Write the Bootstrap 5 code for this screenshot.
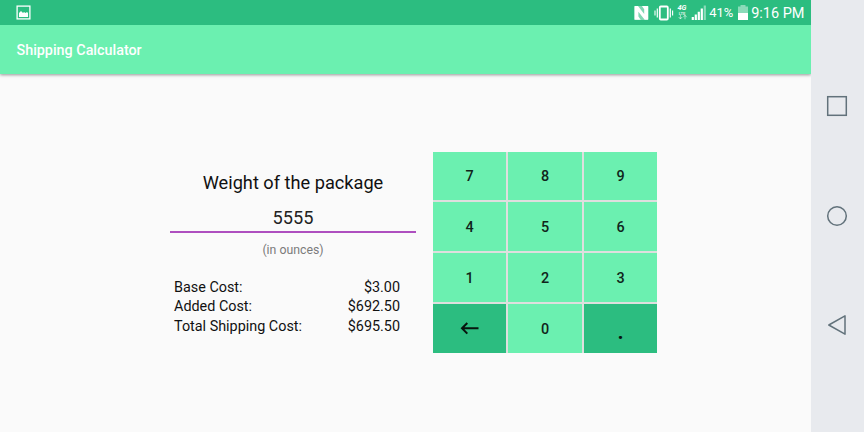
<!DOCTYPE html>
<html lang="en">
<head>
<meta charset="utf-8">
<meta name="viewport" content="width=device-width, initial-scale=1">
<title>Shipping Calculator</title>
<link href="https://cdn.jsdelivr.net/npm/bootstrap@5.3.0/dist/css/bootstrap.min.css" rel="stylesheet">
<style>
body{font-family:Roboto,sans-serif;background:#fafafa;color:#111}
.screen{width:811px}
.status-bar{height:25px;background:#2cbd80;color:#fff;padding:0 6.5px 0 16px}
.status-bar svg{display:block}
.app-bar{height:49px;background:#6bf0b0;color:#fff;padding:2px 16.5px 0;box-shadow:0 1px 3px rgba(0,0,0,.4);clip-path:inset(0 0 -8px 0)}
.app-title{font-size:14.35px;font-weight:500;line-height:18px}
.status-text{font-size:13px;line-height:16px;width:25px;margin:1px 4px 0 2px}
.batt{margin-right:3px}
.clock{font-size:14.5px;line-height:16px;padding-top:2px}
.main-area{padding:78px 0 0 170px}
.form-pane{width:246px;margin-right:17px;padding-top:19px}
.weight-label{font-size:18.2px;line-height:24px}
.weight-input{height:38px;padding:8px 0 0;font-size:18.2px;line-height:24px;color:#222;border:0;border-bottom:2px solid #ae4fbf;border-radius:0;background:transparent}
.weight-input:focus{box-shadow:none;background:transparent;border-color:#ae4fbf}
.unit-hint{font-size:12.3px;line-height:16px;margin-top:9px;color:#7b7b7b}
.costs{margin:19.9px 16px 0 4px;font-size:14.38px;line-height:19.6px}
.keypad{display:grid;grid-template-columns:73px 74px 73px;grid-template-rows:48px 49px 49px 49px;gap:2px;background:#dedfde}
.keypad .btn{--bs-btn-bg:#6bf0b0;--bs-btn-hover-bg:#5fe3a3;--bs-btn-active-bg:#2cbd80;--bs-btn-color:#10251b;font-size:14.4px;font-weight:500;border:0;border-radius:0;padding:2px 0 0;line-height:18px}
.keypad .key-dark{--bs-btn-bg:#2cbd80;--bs-btn-hover-bg:#27ad75;--bs-btn-color:#07150e}
.keypad .key-back{padding:0}
.keypad .dot-key{font-size:24px;padding-top:5px}
.nav-rail{width:53px;background:#e8eaee;padding:95px 1px 0 0}
.nav-rail svg{display:block;margin-bottom:87.5px}
</style>
<script src="https://cdn.jsdelivr.net/npm/bootstrap@5.3.0/dist/js/bootstrap.bundle.min.js"></script>
</head>
<body class="d-flex vh-100 overflow-hidden">
<div class="screen d-flex flex-column flex-shrink-0">
  <div class="status-bar d-flex align-items-center flex-shrink-0">
    <svg width="15" height="15" viewBox="0 0 15 15"><rect x="1.1" y="1.1" width="12.8" height="12.8" fill="none" stroke="#fff" stroke-width="1.3"/><path d="M3 12V8l2-2 2 2 1-1 1.5 1 1.5-1 1 1v4z" fill="#fff"/></svg>
    <div class="d-flex align-items-center ms-auto">
      <!-- NFC, vibrate, 4G LTE and signal indicators -->
      <svg width="74" height="25" viewBox="633.3 0 74 25">
        <rect x="634.6" y="6" width="14" height="14" rx="1.5" fill="#fff" fill-opacity=".4"/>
        <path d="M634.8 6h3.5l6.2 8V9.3l-2.3-3.3h6.3v13.8H645l-6.3-8v4.7l2.3 3.3h-6.2z" fill="#fff"/>
        <rect x="660.1" y="6.5" width="8" height="13" rx="1" fill="none" stroke="#fff" stroke-width="1.8"/>
        <path d="M657.6 8.5v9M670.6 8.5v9" stroke="#fff" stroke-width="1.2"/><path d="M655.3 10.5v5M672.9 10.5v5" stroke="#fff" stroke-width="1.1"/>
        <text x="677.8" y="10" font-size="7.4" font-weight="700" font-style="italic" fill="#fff">4G</text>
        <text x="679" y="14.6" font-size="4.2" font-weight="700" fill="#fff" fill-opacity=".8">LTE</text>
        <path d="M680.7 15v4M679 17l1.7 2 1.7-2M685.3 19.3v-4M683.6 17.2l1.7-2 1.7 2" fill="none" stroke="#fff" stroke-opacity=".55"/>
        <path d="M692 17h2.2v3H692zM695 14.5h2.2V20H695zM698 11.8h2.2V20H698zM701 8.5h2.2V20H701z" fill="#fff"/><path d="M704 5.5h2.2V20H704z" fill="#fff" fill-opacity=".45"/>
      </svg>
      <span class="status-text">41%</span>
      <svg class="batt" width="10" height="15" viewBox="0 0 10 15"><path d="M0 1.5h2.5V0h5v1.5H10V8H0z" fill="#fff" fill-opacity=".45"/><path d="M0 8h10v7H0z" fill="#fff"/></svg>
      <span class="clock">9:16 PM</span>
    </div>
  </div>
  <header class="app-bar d-flex align-items-center flex-shrink-0"><h1 class="app-title mb-0">Shipping Calculator</h1></header>
  <main class="main-area d-flex align-items-start">
    <section class="form-pane">
      <label class="weight-label d-block text-center" for="weight">Weight of the package</label>
      <input id="weight" class="weight-input form-control text-center" value="5555" inputmode="none">
      <div class="unit-hint text-center">(in ounces)</div>
      <div class="costs">
        <div class="d-flex justify-content-between"><span>Base Cost:</span><span>$3.00</span></div>
        <div class="d-flex justify-content-between"><span>Added Cost:</span><span>$692.50</span></div>
        <div class="d-flex justify-content-between"><span>Total Shipping Cost:</span><span>$695.50</span></div>
      </div>
    </section>
    <div class="keypad">
      <button class="btn">7</button><button class="btn">8</button><button class="btn">9</button>
      <button class="btn">4</button><button class="btn">5</button><button class="btn">6</button>
      <button class="btn">1</button><button class="btn">2</button><button class="btn">3</button>
      <button class="btn key-dark key-back d-flex align-items-center justify-content-center" aria-label="Backspace"><svg width="19" height="13" viewBox="0 0 19 13"><path d="M18.5 6.3H2M7.3 1L2 6.3l5.3 5.3" fill="none" stroke="#07150e" stroke-width="2"/></svg></button>
      <button class="btn">0</button><button class="btn key-dark dot-key">.</button>
    </div>
  </main>
</div>
<nav class="nav-rail d-flex flex-column align-items-center flex-shrink-0" aria-label="System">
  <svg width="22" height="22" viewBox="0 0 22 22"><rect x="1.7" y="1.7" width="18.6" height="18.6" fill="none" stroke="#62727b" stroke-width="1.5"/></svg>
  <svg width="22" height="22" viewBox="0 0 22 22"><circle cx="11" cy="11" r="9.3" fill="none" stroke="#62727b" stroke-width="1.5"/></svg>
  <svg width="22" height="22" viewBox="0 0 22 22"><path d="M19 1.8v18.4L2.8 11z" fill="none" stroke="#62727b" stroke-width="1.5" stroke-linejoin="round"/></svg>
</nav>
</body>
</html>
